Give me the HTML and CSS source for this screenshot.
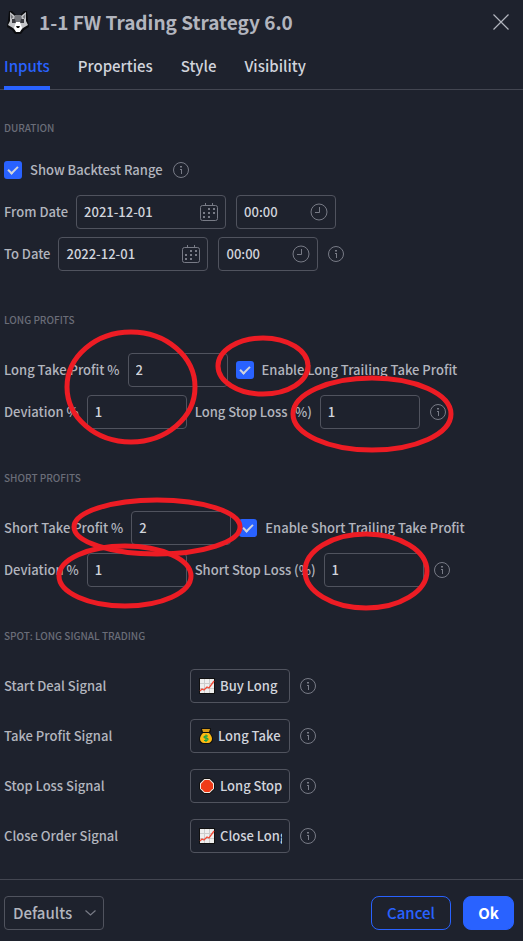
FILE: index.html
```html
<!DOCTYPE html>
<html lang="en">
<head>
<meta charset="utf-8">
<meta name="viewport" content="width=device-width, initial-scale=1">
<title>1-1 FW Trading Strategy 6.0</title>
<link rel="stylesheet" href="styles.css">
</head>
<body>
<svg class="sprite" aria-hidden="true">
  <symbol id="info" viewBox="0 0 16 16"><circle cx="8" cy="8" r="7.500" fill="none" stroke="currentColor"/><path d="M7 4h2v1.500H7zM7 7h2v5H8V8H7z" fill="currentColor"/></symbol>
  <symbol id="calendar" viewBox="0 0 18 18"><rect x=".5" y="2.500" width="17" height="15" rx="2" fill="none" stroke="currentColor"/><path d="M5 0h1v3H5zM12 0h1v3h-1zM8 5h2v2H8zM13 5h2v2h-2zM3 9h2v2H3zM8 9h2v2H8zM13 9h2v2h-2zM3 13h2v2H3zM8 13h2v2H8z" fill="currentColor"/></symbol>
  <symbol id="clock" viewBox="0 0 18 18"><circle cx="9" cy="9" r="8" fill="none" stroke="currentColor"/><path d="M9.500 4v5.500H5" fill="none" stroke="currentColor"/></symbol>
  <symbol id="chart" viewBox="0 0 16 16"><path d="M0 0h16v16H0z" fill="#111"/><path d="M1 1h14v14H1z" fill="#eee"/><path d="M5.500 1v14M10.500 1v14M1 5.500h14M1 10.500h14" stroke="#ccc"/><path d="M1 13l2-2 2 1 3-3 2 1 5-7" fill="none" stroke="#ef4b38" stroke-width="1.300"/></symbol>
  <symbol id="bag" viewBox="0 0 14 16"><path d="M2 0h10v3l-1 2c2 2 3 4 3 6 0 3-2 5-5 5H5c-3 0-5-2-5-5 0-2 1-4 3-6L2 3z" fill="#111"/><path d="M3 1h8L10 4H4z" fill="#d99b18"/><path d="M4 5h6c2 2 3 4 3 6s-2 4-4 4H5c-2 0-4-2-4-4s1-4 3-6z" fill="#fdb913"/><path d="M9 8H6.500Q5 8 5 9t1.500 1h1Q9 10 9 11.200T7.500 12.500H5M7 6.500v7.500" fill="none" stroke="#16a34a" stroke-width="1.200"/></symbol>
  <symbol id="stop" viewBox="0 0 16 16"><path d="M5 0h6l5 5v6l-5 5H5l-5-5V5z" fill="#111"/><path d="M5.300 1h5.400L15 5.300v5.400L10.700 15H5.300L1 10.700V5.300z" fill="#f4e9e4"/><path d="M5.700 2h4.600L14 5.700v4.600L10.300 14H5.700L2 10.300V5.700z" fill="#f03a17"/></symbol>
</svg>

<main class="dialog">
  <header class="head">
    <svg class="wolf" viewBox="0 0 22 24" aria-hidden="true">
      <path d="M2 1l3 0 4 4h4l4-4h3l1 9 1 7-5 3-3 4H8l-3-4-5-3 1-7z" fill="#0b0c0f"/>
      <path d="M3 2l5 4h6l5-4v9l2 4-5 3-3 3H9l-3-3-5-3 2-4z" fill="#c4c5c8"/>
      <path d="M3.500 4l3 3L4 9zM18.500 4l-3 3L18 9z" fill="#77797e"/>
      <path d="M8 5h6l1 4-2 5H9L7 9z" fill="#74767b"/>
      <path d="M5 9h3l1 4H5zM14 9h3v4h-4z" fill="#3a3b40"/>
      <path d="M9 12h4l2 6-2 4H9l-2-4z" fill="#fff"/>
      <path d="M9 16h4l-1 2h-2z" fill="#111"/>
    </svg>
    <h1>1-1 FW Trading Strategy 6.0</h1>
    <button class="close" type="button" aria-label="Close"><svg viewBox="0 0 16 16"><path d="M.5.500l15 15m0-15l-15 15" stroke="currentColor" stroke-width="1.200"/></svg></button>
  </header>
  <nav class="tabs">
    <a class="active" href="#inputs">Inputs</a><a href="#properties">Properties</a><a href="#style">Style</a><a href="#visibility">Visibility</a>
  </nav>

  <form class="body" id="inputs">
    <section>
      <h2>DURATION</h2>
      <div class="row check-row">
        <input type="checkbox" id="range" checked><label for="range">Show Backtest Range</label><svg class="info"><use href="#info"/></svg>
      </div>
      <div class="row">
        <label for="from">From Date</label>
        <span class="field wide"><input id="from" type="text" value="2021-12-01"><svg class="picker"><use href="#calendar"/></svg></span>
        <span class="field next"><input type="text" value="00:00" aria-label="From time"><svg class="picker"><use href="#clock"/></svg></span>
      </div>
      <div class="row">
        <label for="to">To Date</label>
        <span class="field wide"><input id="to" type="text" value="2022-12-01"><svg class="picker"><use href="#calendar"/></svg></span>
        <span class="field next"><input type="text" value="00:00" aria-label="To time"><svg class="picker"><use href="#clock"/></svg></span>
        <svg class="info"><use href="#info"/></svg>
      </div>
    </section>

    <section>
      <h2>LONG PROFITS</h2>
      <div class="row">
        <label for="ltp">Long Take Profit %</label><span class="field"><input id="ltp" type="text" value="2"></span>
        <input type="checkbox" id="ltt" checked><label for="ltt">Enable Long Trailing Take Profit</label>
      </div>
      <div class="row">
        <label for="ldev">Deviation %</label><span class="field"><input id="ldev" type="text" value="1"></span>
        <label for="lsl">Long Stop Loss (%)</label><span class="field"><input id="lsl" type="text" value="1"></span>
        <svg class="info"><use href="#info"/></svg>
      </div>
    </section>

    <section>
      <h2>SHORT PROFITS</h2>
      <div class="row">
        <label for="stp">Short Take Profit %</label><span class="field"><input id="stp" type="text" value="2"></span>
        <input type="checkbox" id="stt" checked><label for="stt">Enable Short Trailing Take Profit</label>
      </div>
      <div class="row">
        <label for="sdev">Deviation %</label><span class="field"><input id="sdev" type="text" value="1"></span>
        <label for="ssl">Short Stop Loss (%)</label><span class="field"><input id="ssl" type="text" value="1"></span>
        <svg class="info"><use href="#info"/></svg>
      </div>
    </section>

    <section class="signals">
      <h2>SPOT: LONG SIGNAL TRADING</h2>
      <div class="row"><label for="s1">Start Deal Signal</label><span class="field"><svg class="emoji"><use href="#chart"/></svg><input id="s1" type="text" value="Buy Long"></span><svg class="info"><use href="#info"/></svg></div>
      <div class="row"><label for="s2">Take Profit Signal</label><span class="field"><svg class="emoji bag"><use href="#bag"/></svg><input id="s2" type="text" value="Long Take"></span><svg class="info"><use href="#info"/></svg></div>
      <div class="row"><label for="s3">Stop Loss Signal</label><span class="field"><svg class="emoji"><use href="#stop"/></svg><input id="s3" type="text" value="Long Stop"></span><svg class="info"><use href="#info"/></svg></div>
      <div class="row"><label for="s4">Close Order Signal</label><span class="field"><svg class="emoji"><use href="#chart"/></svg><input id="s4" type="text" value="Close Long"></span><svg class="info"><use href="#info"/></svg></div>
    </section>
  </form>

  <footer class="foot">
    <span class="defaults"><select aria-label="Defaults"><option>Defaults</option></select><svg viewBox="0 0 11 6"><path d="M.5.500l5 4.500 5-4.500" fill="none" stroke="currentColor" stroke-width="1.200"/></svg></span>
    <button class="cancel" type="button">Cancel</button>
    <button class="ok" type="button">Ok</button>
  </footer>

  <svg class="marks" width="523" height="941" viewBox="0 0 523 941" aria-hidden="true">
    <ellipse cx="131" cy="387" rx="64" ry="55"/>
    <ellipse cx="263" cy="366" rx="45" ry="28"/>
    <ellipse cx="372" cy="414" rx="79" ry="36"/>
    <ellipse cx="157" cy="527" rx="83" ry="27"/>
    <ellipse cx="125" cy="576" rx="66" ry="30"/>
    <ellipse cx="366" cy="571" rx="61" ry="37"/>
  </svg>
</main>
</body>
</html>
```
FILE: styles.css
```css
* { box-sizing: border-box; }
body {
  margin: 0;
  background: #1e222d;
  color: #b2b5be;
  font: 500 13px/20px "Noto Sans CJK SC", sans-serif;
}
input, button, select { font: inherit; color: inherit; }
.sprite { position: absolute; width: 0; height: 0; }
.dialog { position: relative; }

.head { display: flex; align-items: center; height: 44px; padding: 0 14px 0 7px; }
.wolf { width: 22px; height: 24px; }
h1 { flex: 1; margin: 0 0 0 10px; font-size: 19px; line-height: 28px; font-weight: 700; }
.close { display: flex; padding: 0; border: 0; background: none; }
.close svg { width: 16px; height: 16px; }

.tabs { display: flex; gap: 28px; height: 46px; padding: 0 4px; border-bottom: 1px solid #434651; }
.tabs a {
  height: 46px;
  padding-top: 12px;
  color: #d1d4dc;
  font-size: 15px;
  text-decoration: none;
}
.tabs .active { color: #2962ff; border-bottom: 4px solid #2962ff; }

.body { display: flex; flex-direction: column; gap: 41px; padding: 30px 4px 26px; }
section { display: flex; flex-direction: column; gap: 8px; }
h2 { margin: 0 0 17px; color: #6a6d78; font-size: 10px; line-height: 16px; font-weight: 500; }
.row { display: flex; align-items: center; gap: 8px; height: 34px; white-space: nowrap; }
.check-row { height: 18px; margin-bottom: 8px; }
.field {
  display: flex;
  align-items: center;
  flex: none;
  width: 100px;
  height: 34px;
  padding: 0 7px;
  border: 1px solid #50535e;
  border-radius: 4px;
  color: #d1d4dc;
}
.field.wide { width: 150px; }
.field.next { margin-left: 2px; }
.field input { flex: 1; width: 0; min-width: 0; padding: 0; border: 0; outline: 0; background: none; }
.picker { flex: none; width: 18px; height: 18px; color: #787b86; }
.info { flex: none; width: 16px; height: 16px; margin-left: 2px; color: #787b86; }
.emoji { flex: none; width: 16px; height: 16px; margin: 0 5px 0 1px; }
.emoji.bag { width: 14px; }

input[type="checkbox"] {
  appearance: none;
  flex: none;
  width: 18px;
  height: 18px;
  margin: 0;
  border-radius: 3px;
  background: #2962ff;
}
input[type="checkbox"]:checked::before {
  content: "";
  display: block;
  box-sizing: border-box;
  width: 10px;
  height: 6px;
  margin: 5px 4px;
  border: solid #d1d4dc;
  border-width: 0 0 2px 2px;
  transform: rotate(-45deg);
}

.signals { gap: 16px; }
.signals h2 { margin-bottom: 9px; }
.signals label { width: 178px; }

.foot { display: flex; align-items: center; gap: 12px; padding: 16px 9px 11px 4px; border-top: 1px solid #434651; font-size: 15px; }
.defaults { display: flex; align-items: center; position: relative; width: 100px; margin-right: auto; }
.defaults select {
  appearance: none;
  width: 100%;
  height: 34px;
  padding: 0 8px;
  border: 1px solid #50535e;
  border-radius: 4px;
  background: none;
}
.defaults svg { position: absolute; right: 8px; width: 11px; height: 6px; color: #787b86; pointer-events: none; }
.foot button { height: 34px; padding: 0; border: 1px solid #2962ff; border-radius: 8px; }
.foot .cancel { width: 80px; background: none; color: #2962ff; }
.foot .ok { width: 51px; background: #2962ff; color: #fff; font-weight: 700; }

.marks { position: absolute; top: 0; left: 0; pointer-events: none; }
.marks ellipse { fill: none; stroke: #ed1c24; stroke-width: 5px; }
```
